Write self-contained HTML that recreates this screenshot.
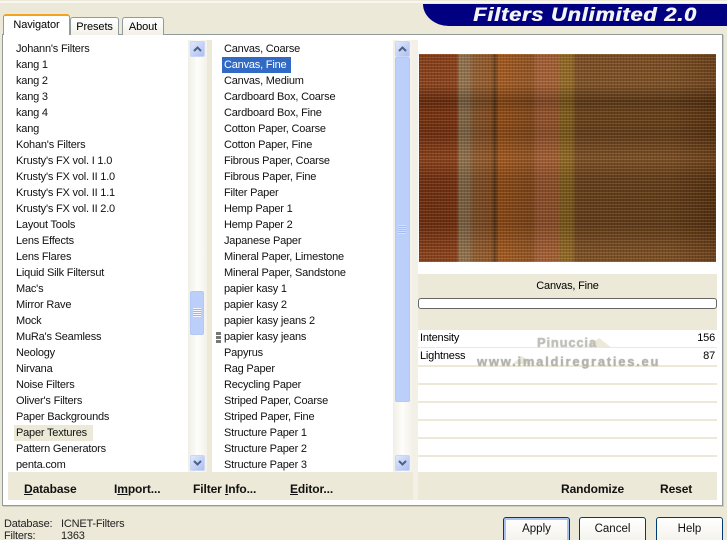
<!DOCTYPE html>
<html>
<head>
<meta charset="utf-8">
<style>
html,body{margin:0;padding:0;width:727px;height:540px;overflow:hidden}
body{background:#ece9d8;font-family:"Liberation Sans",sans-serif;font-size:11px;color:#000}
#w{position:relative;width:727px;height:540px;overflow:hidden;background:#ece9d8}
.a{position:absolute}
.t{position:absolute;white-space:nowrap;line-height:16px;letter-spacing:-.2px}
.list{position:absolute;top:41px;font-size:11px;line-height:16px;white-space:nowrap;color:#111;letter-spacing:-.2px}
.b{position:absolute;top:481px;font-weight:bold;font-size:12px;line-height:16px;white-space:nowrap;color:#111;letter-spacing:-.1px}
u{text-decoration:underline}
.sb{position:absolute;width:15px;height:16px;border:1px solid #c9d6f5;border-radius:2px;box-sizing:border-box;background:linear-gradient(135deg,#dfe8fd,#aebff0)}
.tab{position:absolute;box-sizing:border-box;border:1px solid #919b9c;border-bottom:0;border-radius:3px 3px 0 0;background:linear-gradient(#fff,#f3f1e8);text-align:center;font-size:11px;letter-spacing:-.1px}
.line{position:absolute;left:418px;width:299px;height:2px;background:#ece9d8}
.btn{position:absolute;top:517px;width:67px;height:30px;box-sizing:border-box;border:1px solid #003c74;border-radius:3px;background:linear-gradient(#fff,#f1f0e9);text-align:center;font-size:11.5px;line-height:22px;color:#111}
</style>
</head>
<body>
<div id="w">
<div class="a" style="left:0;top:1px;width:727px;height:2px;background:#f7f6f0"></div>

<!-- header -->
<div class="a" style="left:423px;top:4px;width:304px;height:22px;background:#000080;border-radius:0 0 0 26px/0 0 0 22px"></div>
<div class="t" style="left:473px;top:5px;line-height:22px;font-size:19px;font-weight:bold;font-style:italic;color:#f4f4f4;letter-spacing:.75px;text-shadow:.6px 0 0 #f4f4f4;transform:scaleX(1.14);transform-origin:0 50%">Filters Unlimited 2.0</div>

<!-- panel -->
<div class="a" style="left:2px;top:34px;width:719px;height:470px;border:1px solid #919b9c;background:#fff;box-shadow:1px 1px 0 #d0cdbc"></div>

<!-- tabs -->
<div class="tab" style="left:70px;top:17px;width:49px;height:18px;line-height:18px">Presets</div>
<div class="tab" style="left:122px;top:17px;width:42px;height:18px;line-height:18px">About</div>
<div class="tab" style="left:3px;top:14px;width:67px;height:21px;line-height:19px;background:#fff;border-top:2px solid #f2a320;border-bottom:0;z-index:2">Navigator</div>

<!-- separators / scroll tracks -->
<div class="a" style="left:188px;top:40px;width:19px;height:432px;background:linear-gradient(90deg,#f0efe6,#fdfdfa 50%,#f3f1e8)"></div>
<div class="a" style="left:207px;top:40px;width:5px;height:432px;background:#ece9d8"></div>
<div class="a" style="left:393px;top:40px;width:19px;height:432px;background:linear-gradient(90deg,#f0efe6,#fdfdfa 50%,#f3f1e8)"></div>
<div class="a" style="left:412px;top:40px;width:6px;height:460px;background:#f3f1e7"></div>

<!-- bottom strips -->
<div class="a" style="left:8px;top:472px;width:405px;height:28px;background:#ece9d8"></div>
<div class="a" style="left:418px;top:472px;width:299px;height:28px;background:#ece9d8"></div>

<!-- list 1 -->
<div class="a" style="left:14px;top:425px;width:79px;height:16px;background:#ece9d8"></div>
<div class="list" style="left:16px">Johann's Filters<br>kang 1<br>kang 2<br>kang 3<br>kang 4<br>kang<br>Kohan's Filters<br>Krusty's FX vol. I 1.0<br>Krusty's FX vol. II 1.0<br>Krusty's FX vol. II 1.1<br>Krusty's FX vol. II 2.0<br>Layout Tools<br>Lens Effects<br>Lens Flares<br>Liquid Silk Filtersut<br>Mac's<br>Mirror Rave<br>Mock<br>MuRa's Seamless<br>Neology<br>Nirvana<br>Noise Filters<br>Oliver's Filters<br>Paper Backgrounds<br>Paper Textures<br>Pattern Generators<br>penta.com</div>

<!-- list 2 -->
<div class="a" style="left:222px;top:57px;width:69px;height:16px;background:#316ac5"></div>
<div class="list" style="left:224px">Canvas, Coarse<br><span style="color:#fff">Canvas, Fine</span><br>Canvas, Medium<br>Cardboard Box, Coarse<br>Cardboard Box, Fine<br>Cotton Paper, Coarse<br>Cotton Paper, Fine<br>Fibrous Paper, Coarse<br>Fibrous Paper, Fine<br>Filter Paper<br>Hemp Paper 1<br>Hemp Paper 2<br>Japanese Paper<br>Mineral Paper, Limestone<br>Mineral Paper, Sandstone<br>papier kasy 1<br>papier kasy 2<br>papier kasy jeans 2<br>papier kasy jeans<br>Papyrus<br>Rag Paper<br>Recycling Paper<br>Striped Paper, Coarse<br>Striped Paper, Fine<br>Structure Paper 1<br>Structure Paper 2<br>Structure Paper 3</div>

<!-- drag handle -->
<div class="a" style="left:216px;top:332px;width:5px;height:3px;background:#777"></div>
<div class="a" style="left:216px;top:336px;width:5px;height:3px;background:#777"></div>
<div class="a" style="left:216px;top:340px;width:5px;height:3px;background:#777"></div>

<!-- scrollbar 1 -->
<div class="sb" style="left:190px;top:41px"><svg class="a" style="left:2px;top:3px" width="9" height="8"><path d="M1 6L4.500 2.500L8 6" fill="none" stroke="#4d6185" stroke-width="2"/></svg></div>
<div class="sb" style="left:190px;top:455px"><svg class="a" style="left:2px;top:3px" width="9" height="8"><path d="M1 2L4.500 5.500L8 2" fill="none" stroke="#4d6185" stroke-width="2"/></svg></div>
<div class="a" style="left:190px;top:291px;width:14px;height:44px;box-sizing:border-box;border:1px solid #b4c8f6;border-radius:2px;background:#bccffa"></div>
<div class="a" style="left:193px;top:308px;width:8px;height:9px;background:repeating-linear-gradient(#f2f5fe 0 1px,#9fb6ea 1px 2px)"></div>

<!-- scrollbar 2 -->
<div class="sb" style="left:395px;top:41px"><svg class="a" style="left:2px;top:3px" width="9" height="8"><path d="M1 6L4.500 2.500L8 6" fill="none" stroke="#4d6185" stroke-width="2"/></svg></div>
<div class="sb" style="left:395px;top:455px"><svg class="a" style="left:2px;top:3px" width="9" height="8"><path d="M1 2L4.500 5.500L8 2" fill="none" stroke="#4d6185" stroke-width="2"/></svg></div>
<div class="a" style="left:395px;top:57px;width:15px;height:345px;box-sizing:border-box;border:1px solid #b4c8f6;border-radius:2px;background:#bccffa"></div>
<div class="a" style="left:398px;top:225px;width:8px;height:9px;background:repeating-linear-gradient(#d6e1fb 0 1px,#a8bdef 1px 2px)"></div>

<!-- preview -->
<div class="a" style="left:419px;top:54px;width:297px;height:208px;background:
repeating-linear-gradient(90deg,rgba(0,0,0,.1) 0 1px,rgba(0,0,0,0) 1px 3px),
repeating-linear-gradient(0deg,rgba(255,200,140,.13) 0 1px,rgba(40,10,0,.1) 1px 3px),
linear-gradient(rgba(255,190,130,.08) 0,rgba(255,190,130,.12) 30px,rgba(0,0,0,.2) 47px,rgba(0,0,0,.05) 60px,rgba(0,0,0,.12) 80px,rgba(255,190,130,.1) 105px,rgba(0,0,0,.1) 125px,rgba(0,0,0,.14) 170px,rgba(255,190,130,.1) 200px),
linear-gradient(90deg,#7f3816 0,#823916 38px,#8c7452 40px,#8a7050 50px,#8a5c32 54px,#8c5428 72px,#5a3618 76px,#a0561c 80px,#8a4f20 113px,#a05c36 118px,#9e5c32 138px,#8c6824 142px,#8a6622 153px,#724a22 157px,#704820 250px,#5e3816 297px)"></div>

<!-- name + progress -->
<div class="a" style="left:418px;top:274px;width:299px;height:56px;background:#ece9d8"></div>
<div class="t" style="left:418px;top:278px;width:299px;text-align:center;font-size:11px">Canvas, Fine</div>
<div class="a" style="left:418px;top:298px;width:299px;height:11px;box-sizing:border-box;border:1px solid #666;border-radius:3px;background:#fff"></div>

<!-- params -->
<div class="line" style="top:347px;height:1px"></div>
<div class="line" style="top:365px"></div>
<div class="line" style="top:383px"></div>
<div class="line" style="top:401px"></div>
<div class="line" style="top:419px"></div>
<div class="line" style="top:437px"></div>
<div class="line" style="top:455px"></div>
<div class="t" style="left:420px;top:330px">Intensity</div>
<div class="t" style="left:420px;top:348px">Lightness</div>
<div class="t" style="right:12px;top:330px">156</div>
<div class="t" style="right:12px;top:348px">87</div>

<!-- watermark -->
<div class="a" style="left:586px;top:338px;width:0;height:0;border-left:13px solid transparent;border-right:13px solid transparent;border-bottom:10px solid #ece9d8"></div>
<div class="a" style="left:512px;top:356px;width:0;height:0;border-left:10px solid transparent;border-right:10px solid transparent;border-bottom:8px solid #ece9d8"></div>
<div class="t" style="left:537px;top:335px;font-size:13px;font-weight:bold;color:#c0c0b8;letter-spacing:.8px;text-shadow:0 0 1px #999">Pinuccia</div>
<div class="t" style="left:477px;top:354px;font-size:13px;font-weight:bold;color:#b4b4ab;letter-spacing:1.75px;text-shadow:0 0 1px #999">www.imaldiregraties.eu</div>

<!-- bottom buttons -->
<div class="b" style="left:24px"><u>D</u>atabase</div>
<div class="b" style="left:114px">I<u>m</u>port...</div>
<div class="b" style="left:193px">Filter <u>I</u>nfo...</div>
<div class="b" style="left:290px"><u>E</u>ditor...</div>
<div class="b" style="left:561px">Randomize</div>
<div class="b" style="left:660px">Reset</div>

<!-- status -->
<div class="t" style="left:4px;top:516px;color:#222">Database:</div>
<div class="t" style="left:61px;top:516px;color:#222">ICNET-Filters</div>
<div class="t" style="left:4px;top:528px;color:#222">Filters:</div>
<div class="t" style="left:61px;top:528px;color:#222">1363</div>

<div class="btn" style="left:503px;box-shadow:inset 0 0 0 2px #a9c4ee">Apply</div>
<div class="btn" style="left:579px">Cancel</div>
<div class="btn" style="left:656px">Help</div>
</div>
</body>
</html>
